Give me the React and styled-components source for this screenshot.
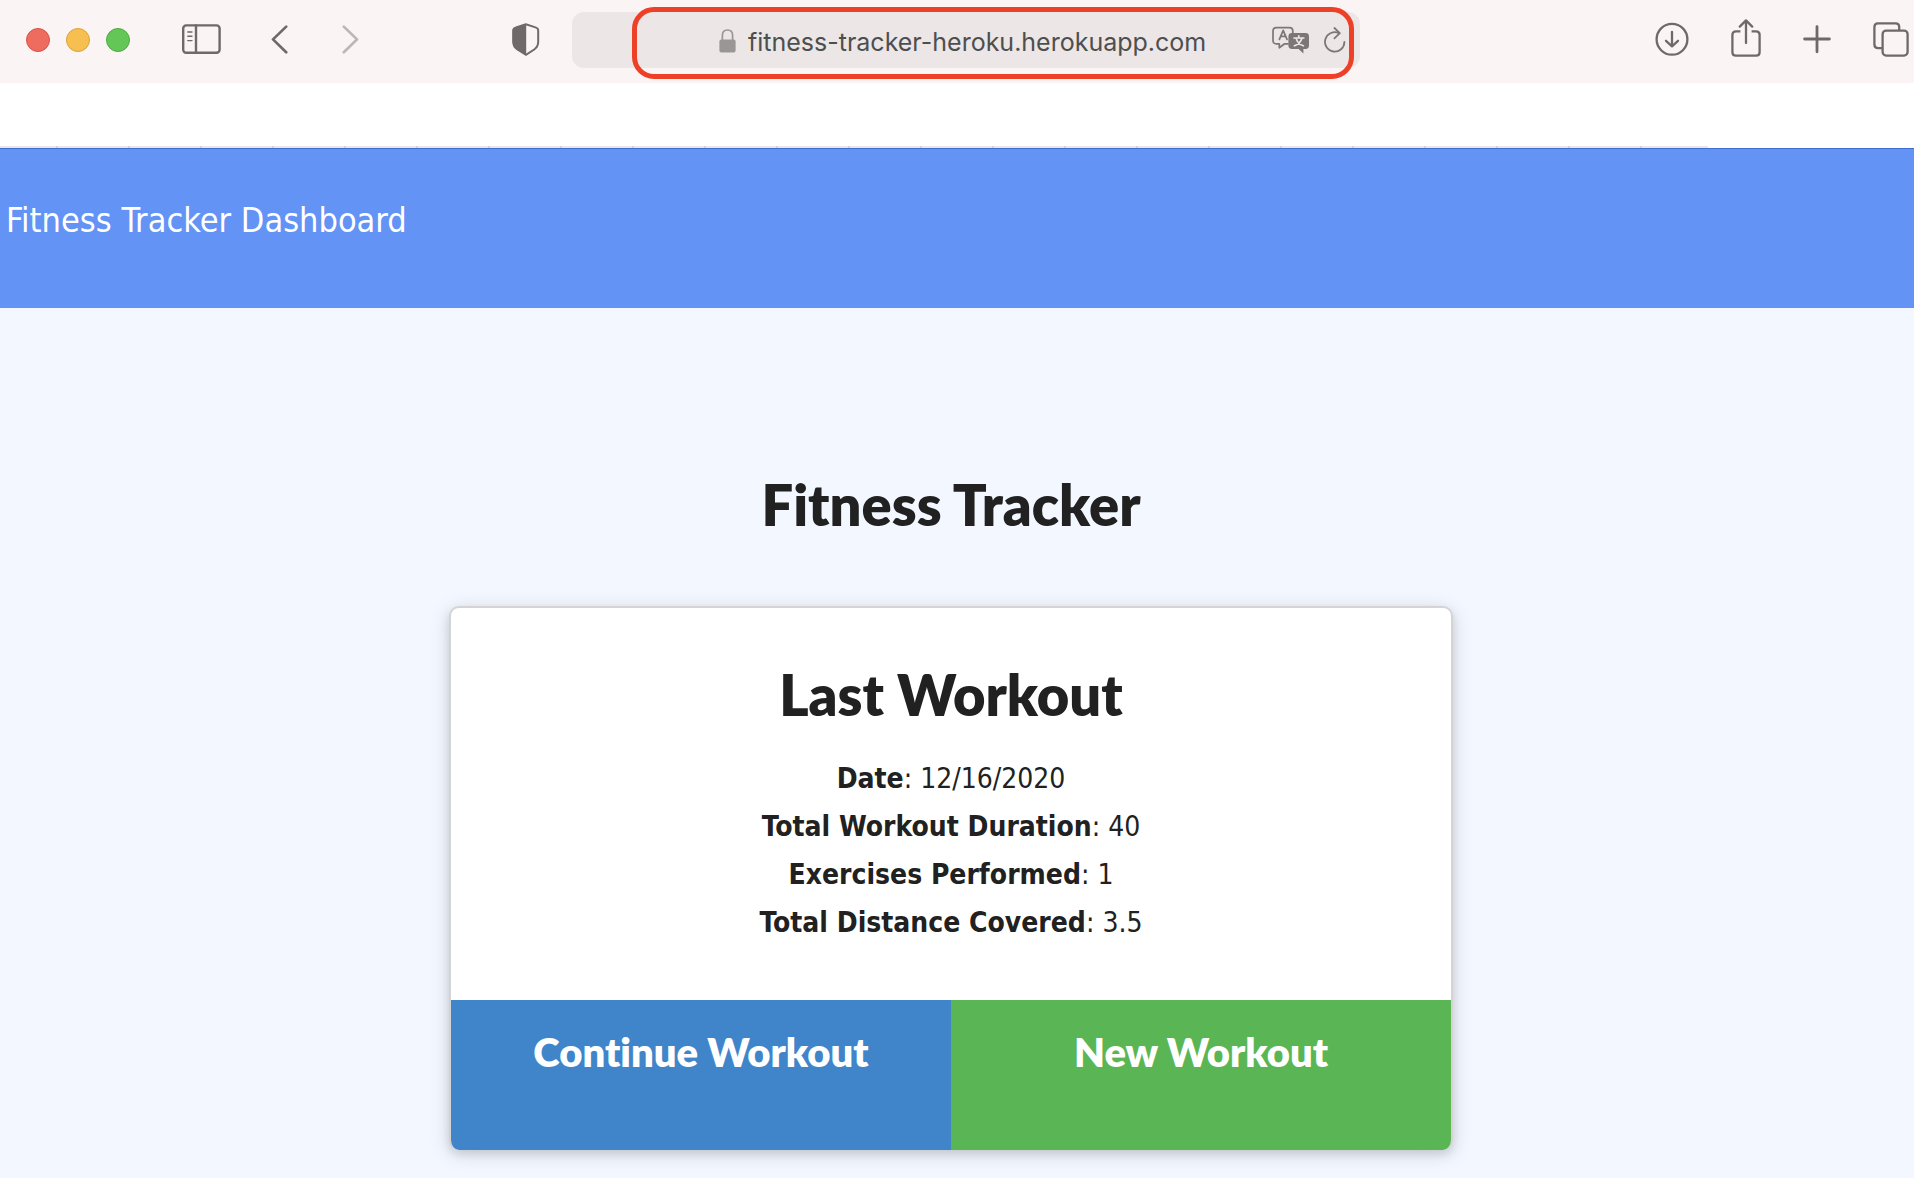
import React from "react";
import styled, { createGlobalStyle } from "styled-components";

const GlobalStyle = createGlobalStyle`
  *, *::before, *::after { box-sizing: border-box; }
  html, body, #root { margin: 0; min-height: 100vh; background: #f3f7ff; }
  body { font-family: "DejaVu Sans Condensed", "DejaVu Sans", sans-serif; color: #212121; overflow-x: hidden; }
  h1, h2, p { margin: 0; }
`;

const Toolbar = styled.header`
  display: flex;
  align-items: center;
  height: 83px;
  padding: 0 5px 3px 26px;
  background: #faf4f4;
  color: #6f6969;
`;

const Lights = styled.div`
  display: flex;
  gap: 16px;
  margin-right: 52px;
`;

const Light = styled.button`
  width: 24px;
  height: 24px;
  padding: 0;
  border: 1px solid ${(p) => p.$edge};
  border-radius: 50%;
  background: ${(p) => p.$fill};
`;

const IconButton = styled.button`
  display: flex;
  flex: none;
  padding: 0;
  border: 0;
  background: none;
  color: ${(p) => p.$color || "inherit"};

  svg { display: block; }
`;

const History = styled.nav`
  display: flex;
  gap: 54px;
  margin: 0 153px 0 50px;
`;

const AddressBar = styled.form`
  position: relative;
  display: flex;
  align-items: center;
  flex: 0 1 788px;
  height: 56px;
  margin: 0 auto 0 32px;
  padding: 0 14px 0 147px;
  border-radius: 12px;
  background: #ece6e6;
`;

const Address = styled.input`
  flex: 1;
  min-width: 0;
  height: 40px;
  margin-left: 12px;
  padding: 4px 0 0;
  border: 0;
  outline: 0;
  background: none;
  color: #4d4f4f;
  font: 400 25px/36px Inter, sans-serif;
`;

const AddressTools = styled.div`
  display: flex;
  align-items: center;
  gap: 14px;
`;

const Highlight = styled.span`
  position: absolute;
  inset: -5px 6px -11px 60px;
  border: 5px solid #ee4027;
  border-radius: 22px;
  pointer-events: none;
`;

const Actions = styled.div`
  display: flex;
  align-items: center;
  gap: 42px;
`;

const TabStrip = styled.div`
  height: 65px;
  background: #fff;

  &::after {
    content: "";
    display: block;
    width: calc(100% - 206px);
    height: 65px;
    background: repeating-linear-gradient(90deg, #e9e7e7 0 56px, #d3d1d2 56px 58px, #e9e7e7 58px 72px) bottom left / 100% 2px no-repeat;
  }
`;

const Navbar = styled.nav`
  height: 160px;
  padding: 48px 6px;
  border-top: 1px solid #3e6fd0;
  background: #6293f5;
`;

const Brand = styled.a`
  display: block;
  color: #fff;
  font-size: 34px;
  line-height: 46px;
  text-decoration: none;
`;

const Main = styled.main`
  display: flex;
  flex-direction: column;
  align-items: center;
  padding: 161px 12px 26px 0;
`;

const Title = styled.h1`
  font: 800 56px/72px Lato, sans-serif;
`;

const Card = styled.section`
  width: 100%;
  max-width: 1004px;
  margin-top: 65px;
  border: 2px solid #d4d4d5;
  border-bottom: 0;
  border-radius: 10px;
  overflow: hidden;
  background: #fff;
  box-shadow: 0 4px 8px rgba(34, 36, 38, 0.12), 0 4px 20px rgba(34, 36, 38, 0.15);
`;

const Summary = styled.div`
  padding: 51px 24px 53px;
  text-align: center;
`;

const CardTitle = styled.h2`
  margin-bottom: 24px;
  font: 800 56px/72px Lato, sans-serif;
`;

const Stat = styled.p`
  font-size: 28px;
  line-height: 48px;
`;

const ButtonRow = styled.div`
  display: grid;
  grid-template-columns: 1fr 1fr;
`;

const WorkoutButton = styled.button`
  display: flex;
  justify-content: center;
  align-items: flex-start;
  padding: 25px 24px 71px;
  border: 0;
  background: ${(p) => p.$fill};
  color: #fff;
  font: 800 40px/54px Lato, sans-serif;
  font-variant-ligatures: none;
`;

const stats = [
  ["Date", "12/16/2020"],
  ["Total Workout Duration", "40"],
  ["Exercises Performed", "1"],
  ["Total Distance Covered", "3.5"],
];

const stroke = { fill: "none", stroke: "currentColor", strokeLinecap: "round", strokeLinejoin: "round" };

const SidebarIcon = () => (
  <svg width="39" height="32" viewBox="0 0 39 32" {...stroke} strokeWidth="2.4">
    <rect x="1.2" y="1.4" width="36.4" height="27.4" rx="3" />
    <path d="M14 1.4v27.4" />
    <path d="M5.8 8h4.2M5.8 12.2h4.2M5.8 16.6h4.2" strokeWidth="1.4" />
  </svg>
);

const ChevronIcon = ({ flip }) => (
  <svg width="17" height="30" viewBox="0 0 17 30" {...stroke} strokeWidth="2.7">
    <path d={flip ? "M1.8 1.6 15 14.4 1.8 27.2" : "M15.2 1.6 2 14.4l13.2 12.8"} />
  </svg>
);

const ShieldIcon = () => (
  <svg width="28" height="34" viewBox="0 0 28 34">
    <path d="M14 1.2 4 4.4Q1.2 5.2 1.2 7.5V19q0 4.6 4.2 7.5L14 31.8l8.2-5.3q4-2.9 4-7.5V7.5q0-2.3-2.7-3.1z" fill="none" stroke="currentColor" strokeWidth="2" />
    <path d="M14.2 1 4 4.2Q.8 5.2.8 7.5V19q0 4.6 4.2 7.7l9.2 5.4z" fill="currentColor" />
  </svg>
);

const LockIcon = () => (
  <svg width="17" height="26" viewBox="0 0 17 26">
    <path d="M3.4 13V8.4C3.4 5 5.4 3 8.5 3s5.1 2 5.1 5.4V13" fill="none" stroke="#9b9696" strokeWidth="1.7" />
    <rect x=".4" y="12.4" width="16.2" height="13" rx="2" fill="#9b9696" />
  </svg>
);

const TranslateIcon = () => (
  <svg width="38" height="28" viewBox="0 0 38 28" {...stroke} strokeWidth="1.7">
    <path d="M16 17.8h-3.4l-5.3 4v-4H4.4Q1 17.8 1 14.6V5q0-3.4 3.4-3.4h13Q20.8 1.6 20.8 5v3" />
    <path d="m7.4 13.4 3.8-9 3.8 9M8.6 10.4h5.2" />
    <path d="M20 7h13.6q3.4 0 3.4 3.4v9.2q0 3.4-3.4 3.4H31.4v4.6L26.6 23H20q-3.6 0-3.6-3.4v-9.2Q16.4 7 20 7z" fill="currentColor" stroke="none" />
    <path d="M22 12h9.8M26.8 9.8V12M29.8 12.4c-1 3.6-3.6 6-7.4 7.4M24.2 12.4c.8 3.4 3.4 6.2 7.2 7.4" stroke="#ece6e6" />
  </svg>
);

const ReloadIcon = () => (
  <svg width="22" height="28" viewBox="0 0 22 28" {...stroke} strokeWidth="1.8">
    <path d="M20.4 15.8A9.7 9.7 0 1 1 15 7.2" />
    <path d="m10.4 2 5.4 5.2-5.4 5.2" />
  </svg>
);

const DownloadIcon = () => (
  <svg width="34" height="36" viewBox="0 0 34 36" {...stroke} strokeWidth="2.3">
    <circle cx="17" cy="17.3" r="15.4" />
    <path d="M17 10v14M11 18.8l6 5.6 6-5.6" />
  </svg>
);

const ShareIcon = () => (
  <svg width="30" height="42" viewBox="0 0 30 42" {...stroke} strokeWidth="2.3">
    <path d="M9.4 12.4H5q-3.6 0-3.6 3.4v17.4q0 3.4 3.6 3.4h20q3.6 0 3.6-3.4V15.8q0-3.4-3.6-3.4h-4.4" strokeLinecap="butt" />
    <path d="M15 24V1.4M8.8 7.6 15 1.4l6.2 6.2" />
  </svg>
);

const PlusIcon = () => (
  <svg width="28" height="30" viewBox="0 0 28 30" {...stroke} strokeWidth="2.8">
    <path d="M14 1.6v25.2M1.6 14h24.8" />
  </svg>
);

const TabsIcon = () => (
  <svg width="36" height="37" viewBox="0 0 36 37" {...stroke} strokeWidth="2.3">
    <path d="M9.4 26.2H5q-3.6 0-3.6-3.6V5Q1.4 1.4 5 1.4h17.6q3.6 0 3.6 3.6v3.4" strokeLinecap="butt" />
    <rect x="9.6" y="8.6" width="25" height="25" rx="3.6" />
  </svg>
);

export default function App() {
  return (
    <>
      <GlobalStyle />
      <Toolbar>
        <Lights>
          <Light aria-label="Close window" $fill="#ee6b60" $edge="#d65549" />
          <Light aria-label="Minimize window" $fill="#f6bf50" $edge="#d9a43c" />
          <Light aria-label="Zoom window" $fill="#63c656" $edge="#4fac42" />
        </Lights>
        <IconButton aria-label="Sidebar"><SidebarIcon /></IconButton>
        <History aria-label="History">
          <IconButton aria-label="Back"><ChevronIcon /></IconButton>
          <IconButton aria-label="Forward" $color="#bcb6b6"><ChevronIcon flip /></IconButton>
        </History>
        <IconButton aria-label="Privacy report"><ShieldIcon /></IconButton>
        <AddressBar onSubmit={(e) => e.preventDefault()}>
          <LockIcon />
          <Address aria-label="Address" defaultValue="fitness-tracker-heroku.herokuapp.com" spellCheck={false} />
          <AddressTools>
            <IconButton type="button" aria-label="Translate" $color="#7b7777"><TranslateIcon /></IconButton>
            <IconButton type="submit" aria-label="Reload" $color="#7b7777"><ReloadIcon /></IconButton>
          </AddressTools>
          <Highlight />
        </AddressBar>
        <Actions>
          <IconButton aria-label="Downloads"><DownloadIcon /></IconButton>
          <IconButton aria-label="Share"><ShareIcon /></IconButton>
          <IconButton aria-label="New tab"><PlusIcon /></IconButton>
          <IconButton aria-label="Show tabs"><TabsIcon /></IconButton>
        </Actions>
      </Toolbar>
      <TabStrip />
      <Navbar>
        <Brand href="#">Fitness Tracker Dashboard</Brand>
      </Navbar>
      <Main>
        <Title>Fitness Tracker</Title>
        <Card>
          <Summary>
            <CardTitle>Last Workout</CardTitle>
            {stats.map(([label, value]) => (
              <Stat key={label}><strong>{label}</strong>: {value}</Stat>
            ))}
          </Summary>
          <ButtonRow>
            <WorkoutButton $fill="#4085ca">Continue Workout</WorkoutButton>
            <WorkoutButton $fill="#5ab654">New Workout</WorkoutButton>
          </ButtonRow>
        </Card>
      </Main>
    </>
  );
}
